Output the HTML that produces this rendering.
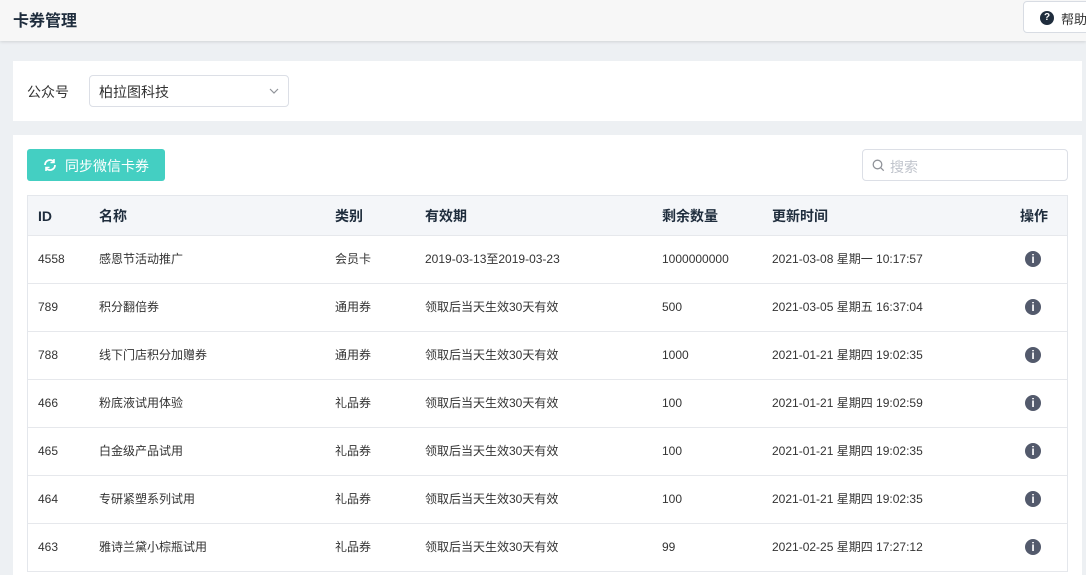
<!DOCTYPE html>
<html><head><meta charset="utf-8"><style>
*{box-sizing:border-box;margin:0;padding:0}
body{width:1086px;height:565px;overflow:hidden;background:#edf0f3;font-family:"Liberation Sans","Noto Sans CJK SC",sans-serif;color:#333;position:relative}
.hdr{position:absolute;left:0;top:0;width:1086px;height:41px;background:#f7f7f7;box-shadow:0 1px 3px rgba(0,0,0,.12)}
.hdr h1{position:absolute;left:13px;top:7px;font-size:16px;font-weight:bold;color:#1f2d3d}
.help{position:absolute;left:1023px;top:1px;width:80px;height:32px;border:1px solid #d8dce3;border-radius:4px;background:#fff;font-size:13px;color:#333;padding:7px 0 0 37px}
.help i{position:absolute;left:16px;top:9px;width:14px;height:14px;border-radius:50%;background:#1f2d3d;color:#fff;font-size:10px;font-style:normal;font-weight:bold;text-align:center;line-height:14px}
.p1{position:absolute;left:13px;top:61px;width:1069px;height:60px;background:#fff}
.p1 .l{position:absolute;left:14px;top:21px;font-size:14px;color:#333}
.sel{position:absolute;left:76px;top:14px;width:200px;height:32px;border:1px solid #dcdfe6;border-radius:4px;font-size:14px;padding:6px 9px;color:#333}
.sel svg{position:absolute;right:9px;top:12px}
.p2{position:absolute;left:13px;top:135px;width:1069px;height:440px;background:#fff}
.btn{position:absolute;left:14px;top:14px;width:138px;height:32px;background:#44cfc2;border-radius:3px;color:#fff;font-size:14px;padding:7px 0 0 38px}
.btn svg{position:absolute;left:16px;top:9px}
.srch{position:absolute;left:849px;top:14px;width:206px;height:32px;border:1px solid #dcdfe6;border-radius:4px;font-size:14px;color:#c0c4cc;padding:7px 0 0 27px}
.srch svg{position:absolute;left:9px;top:9px}
.tbl{position:absolute;left:14px;top:60px;width:1041px;border:1px solid #e4e7ec;border-bottom:none}
.row{position:relative;height:48px;border-bottom:1px solid #e6e8ec;font-size:12px;color:#333}
.row.h{height:40px;background:#f4f6f9;font-size:14px;font-weight:bold;color:#1f2d3d}
.row span{position:absolute;top:0;line-height:47px}
.row.h span{line-height:40px}
.row .c1{left:10px}.row .c2{left:71px}.row .c3{left:307px}.row .c4{left:397px}.row .c5{left:634px}.row .c6{left:744px}.row .c7{left:992px}
.ic{position:absolute;left:997px;top:15px;width:16px;height:16px;border-radius:50%;background:#535a6c;color:#fff;font-size:12px;font-weight:bold;font-style:normal;text-align:center;line-height:17px;font-family:"Liberation Sans",sans-serif}
</style></head><body>
<div class="hdr"><h1>卡券管理</h1><div class="help"><i>?</i>帮助</div></div>
<div class="p1"><span class="l">公众号</span><div class="sel">柏拉图科技<svg width="10" height="6" viewBox="0 0 10 6"><path d="M1 1l4 4 4-4" fill="none" stroke="#909399" stroke-width="1.2"/></svg></div></div>
<div class="p2">
<div class="btn"><svg width="14" height="14" viewBox="0 0 14 14"><path d="M12 7a5 5 0 0 1-9 3M2 7a5 5 0 0 1 9-3" fill="none" stroke="#fff" stroke-width="1.8"/><path d="M11 1v3.5H7.5M3 13V9.5h3.5" fill="none" stroke="#fff" stroke-width="1.6"/></svg>同步微信卡券</div>
<div class="srch"><svg width="13" height="13" viewBox="0 0 13 13"><circle cx="5.5" cy="5.5" r="4.3" fill="none" stroke="#909399" stroke-width="1.3"/><path d="M8.7 8.7l3 3" stroke="#909399" stroke-width="1.3"/></svg>搜索</div>
<div class="tbl">
<div class="row h"><span class="c1">ID</span><span class="c2">名称</span><span class="c3">类别</span><span class="c4">有效期</span><span class="c5">剩余数量</span><span class="c6">更新时间</span><span class="c7">操作</span></div>
<div class="row"><span class="c1">4558</span><span class="c2">感恩节活动推广</span><span class="c3">会员卡</span><span class="c4">2019-03-13至2019-03-23</span><span class="c5">1000000000</span><span class="c6">2021-03-08 星期一 10:17:57</span><i class="ic">i</i></div>
<div class="row"><span class="c1">789</span><span class="c2">积分翻倍券</span><span class="c3">通用券</span><span class="c4">领取后当天生效30天有效</span><span class="c5">500</span><span class="c6">2021-03-05 星期五 16:37:04</span><i class="ic">i</i></div>
<div class="row"><span class="c1">788</span><span class="c2">线下门店积分加赠券</span><span class="c3">通用券</span><span class="c4">领取后当天生效30天有效</span><span class="c5">1000</span><span class="c6">2021-01-21 星期四 19:02:35</span><i class="ic">i</i></div>
<div class="row"><span class="c1">466</span><span class="c2">粉底液试用体验</span><span class="c3">礼品券</span><span class="c4">领取后当天生效30天有效</span><span class="c5">100</span><span class="c6">2021-01-21 星期四 19:02:59</span><i class="ic">i</i></div>
<div class="row"><span class="c1">465</span><span class="c2">白金级产品试用</span><span class="c3">礼品券</span><span class="c4">领取后当天生效30天有效</span><span class="c5">100</span><span class="c6">2021-01-21 星期四 19:02:35</span><i class="ic">i</i></div>
<div class="row"><span class="c1">464</span><span class="c2">专研紧塑系列试用</span><span class="c3">礼品券</span><span class="c4">领取后当天生效30天有效</span><span class="c5">100</span><span class="c6">2021-01-21 星期四 19:02:35</span><i class="ic">i</i></div>
<div class="row"><span class="c1">463</span><span class="c2">雅诗兰黛小棕瓶试用</span><span class="c3">礼品券</span><span class="c4">领取后当天生效30天有效</span><span class="c5">99</span><span class="c6">2021-02-25 星期四 17:27:12</span><i class="ic">i</i></div>
</div></div>
</body></html>
